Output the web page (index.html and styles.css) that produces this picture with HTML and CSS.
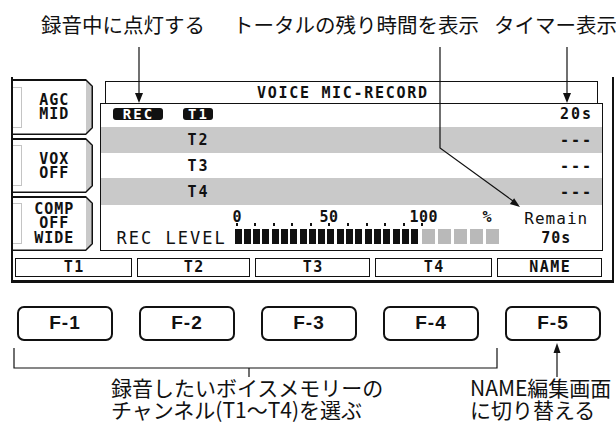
FILE: index.html
```html
<!DOCTYPE html>
<html lang="ja">
<head>
<meta charset="utf-8">
<title>VOICE MIC-RECORD</title>
<link rel="stylesheet" href="styles.css">
</head>
<body>
<div class="page">
  <div class="labels-top">
    <span class="lbl-rec">録音中に点灯する</span>
    <span class="lbl-remain">トータルの残り時間を表示</span>
    <span class="lbl-timer">タイマー表示</span>
  </div>

  <div class="lcd">
    <div class="lcd-body">
      <div class="tabs">
        <div class="tab tab-1"><div class="tab-in"><span class="tab-slot"></span><span class="tab-text">AGC<br>MID</span></div></div>
        <div class="tab"><div class="tab-in"><span class="tab-slot"></span><span class="tab-text">VOX<br>OFF</span></div></div>
        <div class="tab"><div class="tab-in"><span class="tab-slot"></span><span class="tab-text tab-text3">COMP<br>OFF<br>WIDE</span></div></div>
      </div>
      <div class="main">
        <div class="title">VOICE MIC-RECORD</div>
        <div class="screen">
          <div class="row r1"><span class="inv rec">REC</span><span class="inv ch">T1</span><span></span><span class="val">20s</span></div>
          <div class="row r2"><span></span><span class="ch">T2</span><span></span><span class="val">---</span></div>
          <div class="row r3"><span></span><span class="ch">T3</span><span></span><span class="val">---</span></div>
          <div class="row r4"><span></span><span class="ch">T4</span><span></span><span class="val">---</span></div>
          <div class="level">
            <div class="lv-label">REC LEVEL</div>
            <div class="meter">
              <div class="scale"><span class="s0">0</span><span class="s50">50</span><span class="s100">100</span><span class="spct">%</span></div>
              <div class="ticks"><i></i><i></i><i></i><i></i><i></i><i></i><i></i><i></i><i></i><i></i><i></i></div>
              <div class="bars">
                <div class="blk"><i></i><i></i><i></i><i></i><i></i><i></i><i></i><i></i><i></i><i></i><i></i><i></i><i></i><i></i><i></i><i></i><i></i><i></i><i></i><i></i></div>
                <div class="grays"><i></i><i></i><i></i><i></i><i></i></div>
              </div>
            </div>
            <div class="remain"><div class="rm1">Remain</div><div class="rm2">70s</div></div>
          </div>
        </div>
      </div>
    </div>
    <div class="softkeys">
      <div>T1</div><div>T2</div><div>T3</div><div>T4</div><div>NAME</div>
    </div>
  </div>

  <div class="fkeys">
    <div class="fkey">F-1</div>
    <div class="fkey">F-2</div>
    <div class="fkey">F-3</div>
    <div class="fkey">F-4</div>
    <div class="fkey">F-5</div>
  </div>

  <div class="notes">
    <div class="note-l">録音したいボイスメモリーの<br>チャンネル(T1〜T4)を選ぶ</div>
    <div class="note-r">NAME編集画面<br>に切り替える</div>
  </div>

  <svg class="annot" width="616" height="424" viewBox="0 0 616 424">
    <g stroke="#111" stroke-width="1.2" fill="none">
      <path d="M139 47V94"/>
      <path d="M440 47V148L513 201"/>
      <path d="M567 47V94"/>
      <path d="M14 348V368H497V348"/>
      <path d="M249 368V377"/>
      <path d="M557 377V352"/>
    </g>
    <g fill="#111">
      <path d="M139 103L135 93H143Z"/>
      <path d="M567 103L563 93H571Z"/>
      <path d="M520 207L509.9 203.9L514.1 198.3Z"/>
      <path d="M557 343L553.5 353H560.5Z"/>
    </g>
  </svg>
</div>
</body>
</html>
```

FILE: styles.css
```css
* { box-sizing: border-box; }
html, body { margin: 0; padding: 0; background: #fff; }
body { width: 616px; height: 424px; overflow: hidden; }

.page {
  position: relative;
  width: 616px;
  height: 424px;
  overflow: hidden;
  color: #111;
  font-family: "Noto Sans CJK JP", sans-serif;
}

/* top annotation labels */
.labels-top {
  display: flex;
  height: 77px;
  padding-top: 12px;
  font-size: 20.5px;
  line-height: 24px;
  white-space: nowrap;
}
.lbl-rec { margin-left: 41px; }
.lbl-remain { margin-left: 28px; }
.lbl-timer { margin-left: 15px; }

/* LCD */
.lcd {
  margin-left: 11px;
  width: 603px;
  border-left: 2px solid #111;
  border-right: 2px solid #111;
  border-bottom: 3px solid #111;
  padding: 2px 0 3px 0;
  font-family: "DejaVu Sans Mono", monospace;
  font-weight: bold;
  font-size: 15px;
  line-height: 14px;
  color: #111;
}
.lcd-body { display: flex; align-items: flex-start; }

.tabs { width: 80px; display: flex; flex-direction: column; gap: 3px; }
.tab {
  height: 55px;
  display: flex;
  background: #111;
  clip-path: polygon(0 0, calc(100% - 7px) 0, 100% 7px, 100% calc(100% - 7px), calc(100% - 7px) 100%, 0 100%);
}
.tab-1 { height: 56px; }
.tab-in {
  flex: 1;
  margin: 1.5px 1.5px 1.5px 0;
  display: flex;
  align-items: center;
  background: linear-gradient(to right, #fff calc(100% - 6px), #c9c9c9 calc(100% - 6px));
  clip-path: polygon(0 0, calc(100% - 6px) 0, 100% 6px, 100% calc(100% - 6px), calc(100% - 6px) 100%, 0 100%);
}
.tab-slot {
  width: 9px;
  height: 41px;
  border: 1px solid #c4c4c4;
  border-left: 0;
}
.tab-text {
  flex: 1;
  text-align: center;
  padding: 0 6px 0 1px;
  letter-spacing: 1px;
  line-height: 14px;
}
.tab-text3 { line-height: 14.5px; }

.main { width: 503px; margin-left: 7px; margin-top: 2px; }
.title {
  margin: 0 5px;
  height: 22px;
  border: 1.5px solid #111;
  border-bottom: 0;
  padding: 4px 0 0 151px;
  letter-spacing: 1.7px;
  white-space: nowrap;
}
.screen { border: 1.5px solid #111; }

.row {
  display: grid;
  grid-template-columns: 50px 30px 1fr auto;
  column-gap: 20px;
  align-items: center;
  padding: 0 9px 0 11.5px;
}
.r1 { height: 23px; padding-bottom: 3px; }
.r2 { height: 26px; background: #c9c9c9; }
.r3 { height: 25px; }
.r4 { height: 27px; background: #c9c9c9; }

.ch { text-align: center; letter-spacing: 2px; padding-left: 2px; }
.val { letter-spacing: 2px; }
.inv {
  background: #111;
  color: #fff;
  border-radius: 3px;
  height: 12px;
  line-height: 12px;
  font-size: 14px;
}
.rec { text-align: center; letter-spacing: 2px; padding-left: 2px; }

.level {
  height: 44.5px;
  display: grid;
  grid-template-columns: 130.5px 278px 1fr;
}
.lv-label {
  align-self: end;
  padding: 0 0 3.5px 15.5px;
  font-size: 17px;
  line-height: 16px;
  font-weight: normal;
  letter-spacing: 2px;
  white-space: nowrap;
}
.meter { padding-top: 5.9px; }
.scale { display: flex; height: 12px; line-height: 12px; letter-spacing: 0.5px; white-space: nowrap; }
.s0 { width: 88px; padding-left: 1px; }
.s50 { width: 90px; }
.s100 { width: 73px; }
.ticks { display: flex; gap: 16.6px; height: 3px; padding-left: 4px; }
.ticks i { display: block; width: 2px; height: 3px; background: #111; }
.bars { display: flex; height: 15px; margin-top: 3.6px; padding-left: 3px; }
.blk { display: flex; gap: 2.3px; }
.blk i { display: block; width: 7px; background: #111; }
.grays { display: flex; gap: 3px; margin-left: 3.7px; }
.grays i { display: block; width: 13px; background: #b9b9b9; }

.remain { text-align: center; padding-top: 6px; }
.rm1 { font-size: 16px; line-height: 16px; font-weight: normal; letter-spacing: 1px; padding-left: 1px; }
.rm2 { margin-top: 4px; letter-spacing: 1px; padding-left: 1px; }

.softkeys {
  display: grid;
  grid-template-columns: 117px 113px 115px 117px 105px;
  column-gap: 5px;
  margin: 6.5px 0 0 2px;
}
.softkeys div {
  height: 19px;
  border: 1.5px solid #111;
  text-align: center;
  line-height: 16px;
  letter-spacing: 1.5px;
  padding-left: 1.5px;
}

/* hardware keys */
.fkeys { display: flex; gap: 26px; margin-top: 23px; padding-left: 17px; }
.fkey {
  width: 96px;
  height: 35px;
  border: 2.5px solid #111;
  border-radius: 7px;
  display: flex;
  align-items: center;
  justify-content: center;
  font-family: "Liberation Sans", Arial, sans-serif;
  font-weight: bold;
  font-size: 19px;
  letter-spacing: 1px;
}

/* bottom notes */
.notes {
  display: flex;
  margin-top: 35px;
  font-size: 21px;
  line-height: 22px;
  white-space: nowrap;
}
.note-l { margin-left: 111px; width: 359px; }

.annot { position: absolute; left: 0; top: 0; pointer-events: none; }
```
